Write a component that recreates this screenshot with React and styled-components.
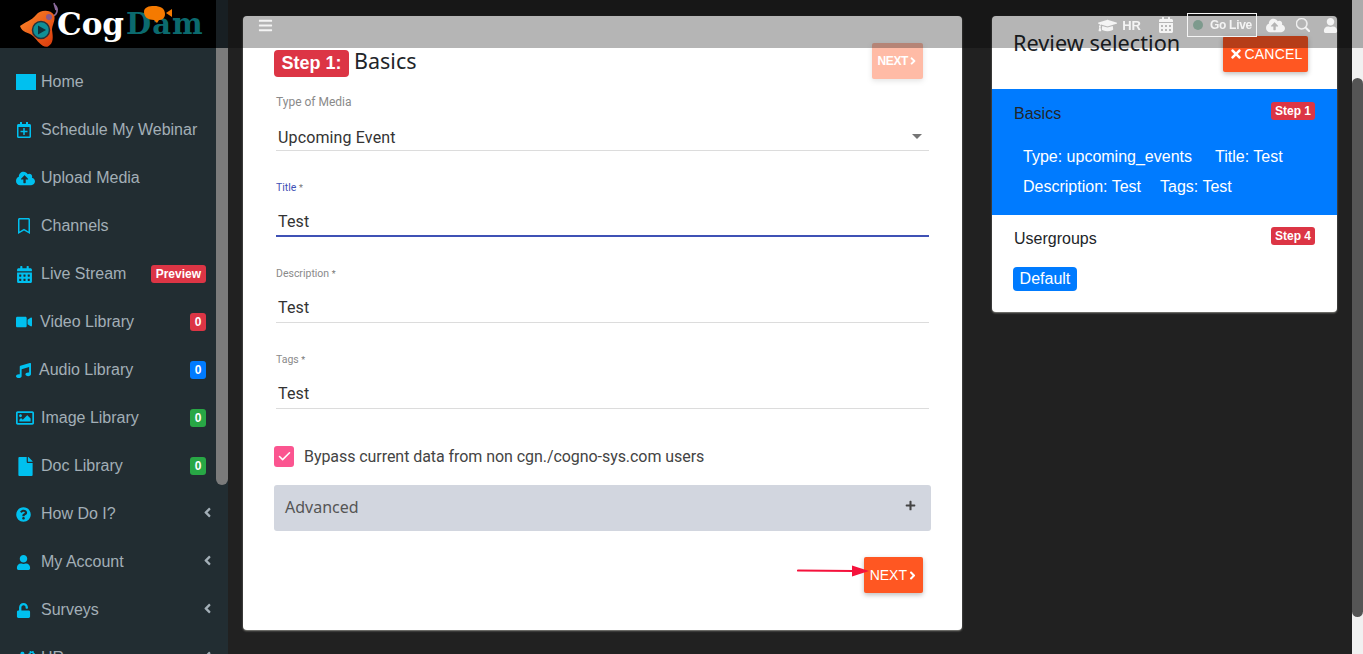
import React from "react";
import styled, { createGlobalStyle } from "styled-components";
import {
  FaAngleLeft,
  FaAngleRight,
  FaBars,
  FaCalendarAlt,
  FaCloudUploadAlt,
  FaCogs,
  FaFile,
  FaGraduationCap,
  FaMusic,
  FaPlus,
  FaQuestionCircle,
  FaRegBookmark,
  FaRegCalendarPlus,
  FaRegImage,
  FaTimes,
  FaUnlock,
  FaUser,
  FaVideo,
} from "react-icons/fa";
import { BsSearch } from "react-icons/bs";
import { FiCheck } from "react-icons/fi";

const GlobalStyle = createGlobalStyle`
  html, body {
    margin: 0;
    height: 100%;
    overflow: hidden;
    background: #212121;
    font-family: "Liberation Sans", Arial, sans-serif;
  }
  * {
    box-sizing: border-box;
  }
`;

const Page = styled.div`
  display: flex;
  height: 654px;
  overflow: hidden;
  background: #212121;
`;

//sidebar
const Sidebar = styled.aside`
  flex: 0 0 216px;
  background: #222d32;
  position: relative;
  z-index: 3;
`;

const LogoBar = styled.div`
  position: relative;
  height: 48px;
  background: #000;
  display: flex;
  align-items: center;
  padding-left: 19px;
  overflow: hidden;
`;

const LogoWord = styled.span`
  font-family: "DejaVu Serif", serif;
  font-weight: 700;
  font-size: ${(props) => props.$size}px;
  color: ${(props) => props.$color};
  margin-left: ${(props) => props.$ml || 0}px;
  letter-spacing: ${(props) => props.$spacing || 0}px;
  line-height: 48px;
`;

const LogoBubble = styled.svg`
  position: absolute;
  left: 143px;
  top: 5px;
`;

const Menu = styled.nav`
  padding-top: 10px;
`;

const MenuItem = styled.div`
  height: 48px;
  display: flex;
  align-items: center;
  padding: 0 10px 0 16px;
  font-size: 16px;
  color: #a3afb7;
`;

const MenuIcon = styled.span`
  flex: 0 0 25px;
  display: flex;
  align-items: center;
  color: #00c0ef;
  font-size: 16px;
`;

const HomeBlock = styled.span`
  width: 20px;
  height: 16px;
  background: #00c0ef;
`;

const MenuLabel = styled.span`
  flex: 1;
  white-space: nowrap;
  margin-left: ${(props) => props.$shift || 0}px;
`;

const Badge = styled.span`
  background: ${(props) => props.$bg};
  color: #fff;
  font-size: 12px;
  font-weight: 700;
  line-height: 18px;
  padding: 0 ${(props) => props.$pad || 5}px;
  border-radius: 3px;
`;

const MenuCaret = styled(FaAngleLeft)`
  font-size: 15px;
  margin: 0 -9px 4px 0;
  color: #a3afb7;
`;

const SideTrack = styled.div`
  flex: 0 0 12px;
  background: #222d32;
  padding-top: 48px;
  position: relative;
  z-index: 1;
`;

const SideThumb = styled.div`
  height: 437px;
  background: #7b7b7b;
  border-radius: 0 0 6px 6px;
`;

//top bar, it sits over the page
const TopBar = styled.header`
  position: fixed;
  top: 0;
  left: 216px;
  right: 0;
  height: 48px;
  background: rgba(0, 0, 0, 0.29);
  z-index: 2;
  display: flex;
  align-items: center;
  padding: 2px 25px 0 42px;
  color: #f4f4f4;
`;

const Burger = styled(FaBars)`
  font-size: 15px;
  margin-right: auto;
`;

const TopItem = styled.span`
  display: flex;
  align-items: center;
  margin-left: ${(props) => props.$ml}px;
  font-size: ${(props) => props.$size || 12}px;
  font-weight: 700;
`;

const SearchGlyph = styled(BsSearch)`
  stroke: currentColor;
  stroke-width: 0.6;
`;

const GoLive = styled.span`
  display: flex;
  align-items: center;
  width: 70px;
  height: 24px;
  margin-left: 13px;
  padding-left: 5px;
  border: 1px solid #f4f4f4;
  font-size: 12px;
  font-weight: 700;
  letter-spacing: -0.3px;
`;

const LiveDot = styled.i`
  width: 10px;
  height: 10px;
  border-radius: 50%;
  background: #7d9a8d;
  margin-right: 7px;
`;

//main column
const Content = styled.main`
  flex: 1;
  display: flex;
  align-items: flex-start;
  gap: 30px;
  padding: 16px 0 0 15px;
`;

const Card = styled.section`
  position: relative;
  flex: 0 0 ${(props) => props.$width}px;
  background: #fff;
  border-radius: 4px;
  box-shadow: 0 1px 2px rgba(200, 200, 190, 0.6);
`;

const FormCard = styled(Card)`
  padding: 27px 31px 37px;
  font-family: Roboto, sans-serif;
`;

const StepHead = styled.div`
  display: flex;
  align-items: flex-start;
  height: 36px;
  margin-bottom: 15px;
  padding-right: 8px;
`;

const StepBadge = styled.span`
  margin-top: 7px;
  height: 27px;
  padding: 0 7.5px;
  background: #dc3545;
  color: #fff;
  border-radius: 4px;
  font: 700 18px/27px "Liberation Sans", Arial, sans-serif;
`;

const StepTitle = styled.h2`
  margin: 3px 0 0 5px;
  font-family: "Noto Sans", sans-serif;
  font-weight: 400;
  font-size: 21.5px;
  line-height: 30px;
  color: #212529;
  flex: 1;
`;

const OrangeButton = styled.button`
  height: 36px;
  padding: 0 ${(props) => props.$pad || 6}px;
  border: 0;
  border-radius: 2px;
  background: #ff5722;
  color: #fff;
  font-family: "Liberation Sans", Arial, sans-serif;
  font-size: ${(props) => props.$size || 14}px;
  font-weight: ${(props) => props.$weight || 400};
  letter-spacing: ${(props) => props.$spacing || 0}px;
  opacity: ${(props) => props.$fade || 1};
  display: inline-flex;
  align-items: center;
  box-shadow: 0 2px 5px rgba(0, 0, 0, 0.26);
`;

const NextCaret = styled(FaAngleRight)`
  margin: 0 -2px 0 -1px;
`;

const CancelCross = styled(FaTimes)`
  margin-right: 2px;
`;

const Field = styled.div`
  margin: 0 2px 28px;
`;

const FieldLabel = styled.label`
  display: block;
  padding-top: ${(props) => (props.$floating ? 1 : 0)}px;
  font-size: ${(props) => (props.$floating ? 10.5 : 12)}px;
  line-height: 16px;
  color: ${(props) => (props.$active ? "#3f51b5" : "#8a8a8a")};

  b {
    font-weight: 400;
    font-size: 9px;
    color: #777;
  }
`;

const FieldValue = styled.div`
  position: relative;
  margin-top: ${(props) => (props.$select ? 16 : 14)}px;
  padding: 0 2px ${(props) => (props.$select ? 0 : props.$active ? 1 : 2)}px;
  font-size: 16px;
  line-height: 24px;
  letter-spacing: 0.14px;
  color: #333;
  border-bottom: ${(props) => (props.$active ? "2px solid #3f51b5" : "1px solid #dcdcdc")};
`;

const SelectCaret = styled.i`
  position: absolute;
  right: 7px;
  top: 8px;
  border-left: 5px solid transparent;
  border-right: 5px solid transparent;
  border-top: 5px solid #757575;
`;

const CheckRow = styled.div`
  display: flex;
  align-items: center;
  gap: 10px;
  margin-top: 37px;
  height: 21px;
  font-size: 16px;
  letter-spacing: -0.06px;
  color: #444;
`;

const CheckBox = styled.span`
  width: 20px;
  height: 21px;
  border-radius: 3px;
  background: #fb5590;
  color: #fff;
  display: flex;
  align-items: center;
  justify-content: center;
  font-size: 15px;
`;

const Advanced = styled.div`
  margin-top: 18px;
  height: 46px;
  display: flex;
  align-items: center;
  justify-content: space-between;
  padding: 0 15px 2px 11px;
  background: #d2d6df;
  border-radius: 3px;
  font-family: "Noto Sans", sans-serif;
  font-size: 16px;
  color: #555;

  svg {
    font-size: 11px;
    color: #444;
    margin-bottom: 3px;
  }
`;

const FormFoot = styled.div`
  margin-top: 26px;
  display: flex;
  justify-content: flex-end;
  padding-right: 8px;
`;

const ArrowMark = styled.svg`
  position: absolute;
  left: 554px;
  bottom: 53px;
`;

//review panel
const ReviewHead = styled.div`
  height: 73px;
  display: flex;
  justify-content: space-between;
  align-items: flex-start;
  padding: 20px 29px 0 21px;
`;

const ReviewTitle = styled.h2`
  margin: -8px 0 0;
  font-family: "Noto Sans", sans-serif;
  font-weight: 400;
  font-size: 21.7px;
  line-height: 30px;
  color: #212529;
`;

const ReviewBlock = styled.div`
  padding: ${(props) => (props.$active ? "13px 22px 13px" : "12px 22px 21px")};
  background: ${(props) => (props.$active ? "#007bff" : "transparent")};
`;

const BlockHead = styled.div`
  display: flex;
  justify-content: space-between;
  align-items: flex-start;
  font-size: 16px;
  line-height: 24px;
  color: #212529;
`;

const BlockBadge = styled(Badge)`
  padding: 0 4px;
`;

const SummaryList = styled.div`
  margin-top: 16px;
  padding-left: 9px;
`;

const SummaryLine = styled.div`
  display: flex;
  gap: ${(props) => props.$gap}px;
  height: 30px;
  line-height: 30px;
  font-size: 16px;
  color: #fff;
`;

const GroupTag = styled.span`
  display: inline-block;
  margin: 16px 0 0 -1px;
  height: 24px;
  line-height: 24px;
  padding: 0 6.6px;
  background: #007bff;
  color: #fff;
  font-size: 16px;
  border-radius: 4px;
`;

const PageTrack = styled.div`
  flex: 0 0 11px;
  height: 654px;
  background: #f1f1f1;
  padding-top: 78px;
`;

const PageThumb = styled.div`
  height: 539px;
  background: #555;
  border-radius: 6px;
`;

const menu = [
  { label: "Home", icon: <HomeBlock /> },
  { label: "Schedule My Webinar", icon: <FaRegCalendarPlus /> },
  { label: "Upload Media", icon: <FaCloudUploadAlt size={19} /> },
  { label: "Channels", icon: <FaRegBookmark size={16} /> },
  { label: "Live Stream", icon: <FaCalendarAlt size={17} />, badge: "Preview", color: "#dc3545" },
  { label: "Video Library", icon: <FaVideo />, badge: "0", color: "#dc3545", shift: -1, pad: 4.6 },
  { label: "Audio Library", icon: <FaMusic size={15} />, badge: "0", color: "#007bff", shift: -2, pad: 4.6 },
  { label: "Image Library", icon: <FaRegImage size={18} />, badge: "0", color: "#28a745", pad: 4.6 },
  { label: "Doc Library", icon: <FaFile size={19} />, badge: "0", color: "#28a745", pad: 4.6 },
  { label: "How Do I?", icon: <FaQuestionCircle size={15} />, caret: true },
  { label: "My Account", icon: <FaUser size={15} />, caret: true },
  { label: "Surveys", icon: <FaUnlock size={15} />, caret: true },
  { label: "HR", icon: <FaCogs size={19} />, caret: true },
];

const fields = [
  { label: "Title", value: "Test", active: true },
  { label: "Description", value: "Test" },
  { label: "Tags", value: "Test" },
];

function Logo() {
  return (
    <LogoBar>
      <svg width="40" height="48" viewBox="0 0 40 48">
        <defs>
          <linearGradient id="blob" x1="0" y1="0" x2="1" y2="1">
            <stop offset="0" stopColor="#ff8a2a" />
            <stop offset="1" stopColor="#d8380c" />
          </linearGradient>
        </defs>
        <path d="M35 3 L37 10 M36 5 C40 9 38 15 34 16" stroke="#8a6a9a" strokeWidth="1.6" fill="none" />
        <path
          d="M1 26 C6 22 12 21 17 15 C22 9 32 10 35 15 C37 20 33 25 33 30 C34 37 35 43 29 46.5 C23 48 19 41 14 36 C10 32 3 33 1 26 Z"
          fill="url(#blob)"
        />
        <circle cx="30" cy="17" r="3" fill="#8a5a8a" />
        <circle cx="22" cy="30" r="8.5" fill="#0f8f96" stroke="#26323a" strokeWidth="1.5" />
        <path d="M19 25.5 L27 30 L19 34.5 Z" fill="#10303a" />
      </svg>
      <LogoWord $color="#fff" $size={31} $ml={-2}>
        Cog
      </LogoWord>
      <LogoWord $color="#0b6a6e" $size={29} $ml={2} $spacing={1}>
        Dam
      </LogoWord>
      <LogoBubble width="30" height="20" viewBox="0 0 30 20">
        <path d="M1 7 C1 2 6 1 11 1 C17 1 22 3 22 9 C22 14 18 15 16 15 L14 18 L11 15 C5 15 1 12 1 7 Z" fill="#f57a00" />
        <path d="M23 8 L29 4 L29 12 Z" fill="#f57a00" />
      </LogoBubble>
    </LogoBar>
  );
}

export default function App() {
  return (
    <>
      <GlobalStyle />
      <Page>
        <Sidebar>
          <Logo />
          <Menu>
            {menu.map((item) => (
              <MenuItem key={item.label}>
                <MenuIcon>{item.icon}</MenuIcon>
                <MenuLabel $shift={item.shift}>{item.label}</MenuLabel>
                {item.badge && (
                  <Badge $bg={item.color} $pad={item.pad}>
                    {item.badge}
                  </Badge>
                )}
                {item.caret && <MenuCaret />}
              </MenuItem>
            ))}
          </Menu>
        </Sidebar>
        <SideTrack>
          <SideThumb />
        </SideTrack>

        <TopBar>
          <Burger />
          <TopItem $ml={0} $size={19}>
            <FaGraduationCap />
          </TopItem>
          <TopItem $ml={5} $size={13}>
            HR
          </TopItem>
          <TopItem $ml={17} $size={16}>
            <FaCalendarAlt />
          </TopItem>
          <GoLive>
            <LiveDot />
            Go Live
          </GoLive>
          <TopItem $ml={9} $size={19}>
            <FaCloudUploadAlt />
          </TopItem>
          <TopItem $ml={11} $size={14}>
            <SearchGlyph />
          </TopItem>
          <TopItem $ml={13} $size={15}>
            <FaUser />
          </TopItem>
        </TopBar>

        <Content>
          <FormCard $width={719}>
            <StepHead>
              <StepBadge>Step 1:</StepBadge>
              <StepTitle>Basics</StepTitle>
              <OrangeButton $fade={0.4} $size={12} $weight={700} $spacing={-0.4}>
                NEXT
                <NextCaret size={12} />
              </OrangeButton>
            </StepHead>

            <Field>
              <FieldLabel>Type of Media</FieldLabel>
              <FieldValue $select>
                Upcoming Event
                <SelectCaret />
              </FieldValue>
            </Field>

            {fields.map((field) => (
              <Field key={field.label}>
                <FieldLabel $floating $active={field.active}>
                  {field.label} <b>*</b>
                </FieldLabel>
                <FieldValue $active={field.active}>{field.value}</FieldValue>
              </Field>
            ))}

            <CheckRow>
              <CheckBox>
                <FiCheck strokeWidth={2.5} />
              </CheckBox>
              Bypass current data from non cgn./cogno-sys.com users
            </CheckRow>

            <Advanced>
              Advanced
              <FaPlus />
            </Advanced>

            <FormFoot>
              <OrangeButton>
                NEXT
                <NextCaret size={13} />
              </OrangeButton>
            </FormFoot>

            <ArrowMark width="74" height="12" viewBox="0 0 74 12">
              <path d="M1 5.5 L56 6" stroke="#f5123c" strokeWidth="2.2" strokeLinecap="round" />
              <path d="M55 0.5 L72 6 L55 11.5 Z" fill="#f5123c" />
            </ArrowMark>
          </FormCard>

          <Card $width={345}>
            <ReviewHead>
              <ReviewTitle>Review selection</ReviewTitle>
              <OrangeButton $pad={5.5} $spacing={0.2}>
                <CancelCross size={14} />
                CANCEL
              </OrangeButton>
            </ReviewHead>

            <ReviewBlock $active>
              <BlockHead>
                Basics
                <BlockBadge $bg="#dc3545">Step 1</BlockBadge>
              </BlockHead>
              <SummaryList>
                <SummaryLine $gap={23}>
                  <span>Type: upcoming_events</span>
                  <span>Title: Test</span>
                </SummaryLine>
                <SummaryLine $gap={19}>
                  <span>Description: Test</span>
                  <span>Tags: Test</span>
                </SummaryLine>
              </SummaryList>
            </ReviewBlock>

            <ReviewBlock>
              <BlockHead>
                Usergroups
                <BlockBadge $bg="#dc3545">Step 4</BlockBadge>
              </BlockHead>
              <GroupTag>Default</GroupTag>
            </ReviewBlock>
          </Card>
        </Content>

        <PageTrack>
          <PageThumb />
        </PageTrack>
      </Page>
    </>
  );
}
